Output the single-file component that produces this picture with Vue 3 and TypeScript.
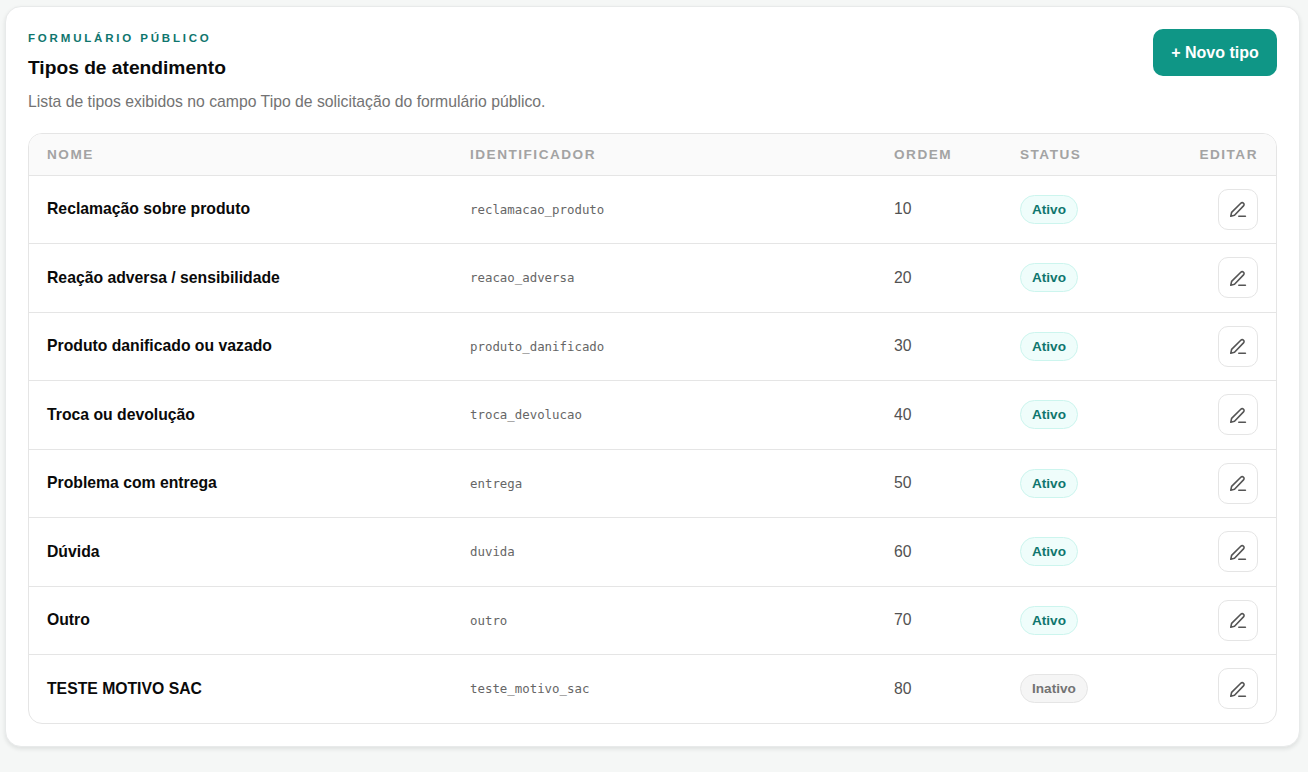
<template>
  <div class="page">
    <section class="card">
      <header class="card__header">
        <div class="card__intro">
          <span class="card__eyebrow">FORMULÁRIO PÚBLICO</span>
          <h1>Tipos de atendimento</h1>
          <p>Lista de tipos exibidos no campo Tipo de solicitação do formulário público.</p>
        </div>
        <button class="btn-new" type="button">+ Novo tipo</button>
      </header>

      <div class="table-wrap">
        <table>
          <colgroup>
            <col class="col-name" />
            <col class="col-id" />
            <col class="col-order" />
            <col class="col-status" />
            <col />
          </colgroup>
          <thead>
            <tr>
              <th>Nome</th>
              <th>Identificador</th>
              <th>Ordem</th>
              <th>Status</th>
              <th class="is-right">Editar</th>
            </tr>
          </thead>
          <tbody>
            <tr v-for="item in types" :key="item.slug">
              <td class="cell-name">{{ item.name }}</td>
              <td class="cell-slug">{{ item.slug }}</td>
              <td class="cell-order">{{ item.order }}</td>
              <td>
                <span class="badge" :class="{ 'badge--off': !item.active }">{{ item.active ? 'Ativo' : 'Inativo' }}</span>
              </td>
              <td class="is-right">
                <button class="btn-edit" type="button" :aria-label="'Editar ' + item.name">
                  <svg width="18" height="18" viewBox="0 0 18 18" fill="none" stroke="#555" stroke-width="1.6" stroke-linecap="round" stroke-linejoin="round">
                    <path d="M1.800 16.200l.8-3.800L11.800 3.200a1.900 1.900 0 0 1 2.700 0a1.900 1.900 0 0 1 0 2.700L5.500 15.300z" />
                    <path d="M9.800 16.300h6.600" />
                  </svg>
                </button>
              </td>
            </tr>
          </tbody>
        </table>
      </div>
    </section>
  </div>
</template>

<script setup lang="ts">
interface AttendanceType {
  name: string
  slug: string
  order: number
  active: boolean
}

const types: AttendanceType[] = [
  { name: 'Reclamação sobre produto', slug: 'reclamacao_produto', order: 10, active: true },
  { name: 'Reação adversa / sensibilidade', slug: 'reacao_adversa', order: 20, active: true },
  { name: 'Produto danificado ou vazado', slug: 'produto_danificado', order: 30, active: true },
  { name: 'Troca ou devolução', slug: 'troca_devolucao', order: 40, active: true },
  { name: 'Problema com entrega', slug: 'entrega', order: 50, active: true },
  { name: 'Dúvida', slug: 'duvida', order: 60, active: true },
  { name: 'Outro', slug: 'outro', order: 70, active: true },
  { name: 'TESTE MOTIVO SAC', slug: 'teste_motivo_sac', order: 80, active: false },
]
</script>

<style>
html, body { background: #f5f7f6; }
</style>

<style scoped>
.page { box-sizing: border-box; min-height: 772px; padding: 6px 8px 0 5px; font-family: "Liberation Sans", Arial, sans-serif; }
.card { box-sizing: border-box; height: 741px; padding: 22px; border: 1px solid #e8eaea; border-radius: 16px; background: #fff; box-shadow: 0 2px 4px rgba(20, 30, 25, .1); }
.card__header { display: flex; align-items: flex-start; justify-content: space-between; gap: 24px; margin-bottom: 22px; }
.card__eyebrow { display: block; margin-top: 2px; color: #0f766e; font-size: 11.5px; font-weight: 700; line-height: 14px; letter-spacing: 2.82px; }
.card__intro h1 { margin: 10px 0 0; color: #0a0a0a; font-size: 19.2px; font-weight: 700; line-height: 26px; }
.card__intro p { margin: 12px 0 0; color: #737373; font-size: 15.75px; line-height: 18px; }
.btn-new { box-sizing: border-box; width: 124px; height: 47px; border: 0; border-radius: 10px; background: #0f9686; color: #fff; font-family: inherit; font-size: 16px; font-weight: 700; }
.table-wrap { overflow: hidden; border: 1px solid #e5e5e5; border-radius: 14px; }
table { width: 100%; border-collapse: separate; border-spacing: 0; table-layout: fixed; }
.col-name { width: 423px; }
.col-id { width: 424px; }
.col-order { width: 126px; }
.col-status { width: 150px; }
th { height: 40.5px; padding: 0 18px; border-bottom: 1px solid #e5e5e5; background: #fafafa; color: #a3a3a3; font-size: 13.6px; font-weight: 700; letter-spacing: 1.5px; text-align: left; text-transform: uppercase; }
td { height: 67.5px; padding: 0 18px; border-bottom: 1px solid #e5e5e5; color: #525252; font-size: 15.75px; }
tbody tr:last-child td { border-bottom: 0; }
th.is-right, td.is-right { text-align: right; }
.cell-name { color: #0a0a0a; font-size: 15.75px; font-weight: 700; }
.cell-slug { color: #666; font-family: "DejaVu Sans Mono", "Liberation Mono", monospace; font-size: 12.4px; }
.cell-order { color: #525252; }
.badge { display: inline-block; box-sizing: border-box; height: 29px; padding: 0 11px; border: 1px solid #ccf5ee; border-radius: 999px; background: #effdfb; color: #0f766e; font-size: 13.6px; font-weight: 700; line-height: 27px; }
.badge--off { border-color: #e5e5e5; background: #f5f5f5; color: #737373; }
.btn-edit { display: inline-flex; align-items: center; justify-content: center; box-sizing: border-box; width: 40px; height: 41px; padding: 0; border: 1px solid #e5e5e5; border-radius: 10px; background: #fff; vertical-align: middle; }
</style>
